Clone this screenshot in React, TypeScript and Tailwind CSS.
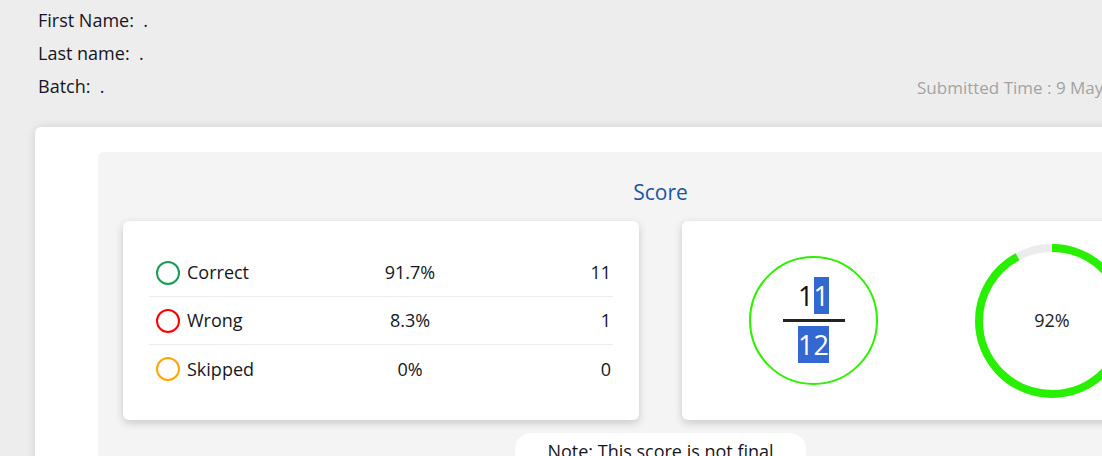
import React from "react";

const rows = [
  { label: "Correct", pct: "91.7%", count: "11", color: "#1a9b56" },
  { label: "Wrong", pct: "8.3%", count: "1", color: "#ff0000" },
  { label: "Skipped", pct: "0%", count: "0", color: "#ffa500" },
];

const Donut: React.FC<{ value: number }> = ({ value }) => {
  const r = 73;
  const c = 2 * Math.PI * r;
  return (
    <div className="relative w-[160px] h-[160px] shrink-0">
      <svg width="160" height="160" viewBox="0 0 160 160" className="-rotate-90">
        <circle cx="80" cy="80" r={r} fill="none" stroke="#ececec" strokeWidth="8" />
        <circle
          cx="80"
          cy="80"
          r={r}
          fill="none"
          stroke="#27f000"
          strokeWidth="8"
          strokeDasharray={`${(c * value) / 100} ${c}`}
        />
      </svg>
      <div className="absolute inset-0 flex items-center justify-center text-[18px] text-[#222]">
        {value}%
      </div>
    </div>
  );
};

export default function App() {
  return (
    <div className="w-[1102px] h-[456px] overflow-hidden bg-[#ededed] font-['Open_Sans','Noto_Sans',sans-serif] text-[#161622]">
      <div className="w-[1320px]">
        {/* header */}
        <div className="flex items-end pl-[38px] pr-[35px] pt-[8px]">
          <div className="flex flex-col gap-[9px] text-[18px] leading-[24px]">
            <div>First Name:&nbsp; .</div>
            <div>Last name:&nbsp; .</div>
            <div>Batch:&nbsp; .</div>
          </div>
          <div className="ml-auto w-[368px] whitespace-nowrap text-[17px] leading-[24px] text-[#a3a3a3] mb-[-2px]">
            Submitted Time : 9 May 2024, 10:30 AM
          </div>
        </div>

        <div className="ml-[35px] mt-[29px] w-[1251px] bg-white rounded-[6px] shadow-[0_0_10px_rgba(0,0,0,0.12)] pt-[25px] px-[63px] pb-[40px]">
          <div className="bg-[#f4f4f4] rounded-[6px] px-[25px] pt-[26px] pb-[20px]">
            <div className="text-center text-[21px] leading-[28px] text-[#1b55a0] mb-[15px]">Score</div>
            <div className="flex gap-[43px]">
              {/* stats table */}
              <div className="w-[516px] h-[199px] bg-white rounded-[6px] shadow-[0_3px_8px_rgba(0,0,0,0.18)] px-[26px] pt-[28px]">
                {rows.map((row, i) => (
                  <div
                    key={row.label}
                    className={`flex items-center h-[48px] ${i < rows.length - 1 ? "border-b-[1.5px] border-[#ececec]" : ""}`}
                  >
                    <span
                      className="w-[24px] h-[24px] rounded-full border-[2.5px] ml-[7px] mr-[7px] shrink-0"
                      style={{ borderColor: row.color }}
                    />
                    <span className="w-[153px] text-[18px]">{row.label}</span>
                    <span className="w-[140px] text-center text-[18px]">{row.pct}</span>
                    <span className="flex-1 text-right text-[18px] pr-[2px]">{row.count}</span>
                  </div>
                ))}
              </div>

              {/* score visuals */}
              <div className="w-[516px] h-[199px] bg-white rounded-[6px] shadow-[0_3px_8px_rgba(0,0,0,0.18)] flex items-center pl-[67px] gap-[94px]">
                <div className="w-[129px] h-[129px] rounded-full border-[2px] border-[#2ef000] flex flex-col items-center justify-center shrink-0">
                  <div className="text-[27px] leading-[38px] text-[#111]">
                    1<span className="bg-[#3367d1] text-white">1</span>
                  </div>
                  <div className="w-[62px] h-[3px] bg-[#222] my-[4px]" />
                  <div className="text-[27px] leading-[38px]">
                    <span className="bg-[#3367d1] text-white">12</span>
                  </div>
                </div>
                <Donut value={92} />
              </div>
            </div>
            <div className="flex justify-center mt-[13px]">
              <div className="bg-white rounded-[16px] px-[32px] py-[6px] text-[18px] leading-[24px]">
                Note: This score is not final
              </div>
            </div>
          </div>
        </div>
      </div>
    </div>
  );
}
